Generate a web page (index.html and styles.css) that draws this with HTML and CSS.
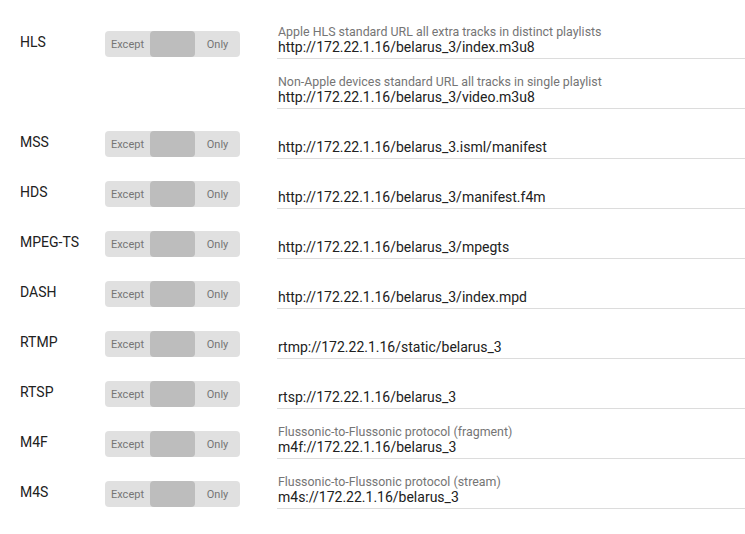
FILE: index.html
```html
<!DOCTYPE html>
<html>
<head>
<meta charset="utf-8">
<link rel="stylesheet" href="styles.css">
</head>
<body>
<div class="list">
  <div class="row">
    <div class="label">HLS</div>
    <div class="toggle"><span class="seg">Except</span><span class="seg knob"></span><span class="seg">Only</span></div>
    <div class="field"><div class="caption">Apple HLS standard URL all extra tracks in distinct playlists</div><div class="url">http://172.22.1.16/belarus_3/index.m3u8</div></div>
  </div>
  <div class="row">
    <div class="label"></div>
    <div class="spacer"></div>
    <div class="field"><div class="caption">Non-Apple devices standard URL all tracks in single playlist</div><div class="url">http://172.22.1.16/belarus_3/video.m3u8</div></div>
  </div>
  <div class="row">
    <div class="label">MSS</div>
    <div class="toggle"><span class="seg">Except</span><span class="seg knob"></span><span class="seg">Only</span></div>
    <div class="field"><div class="url">http://172.22.1.16/belarus_3.isml/manifest</div></div>
  </div>
  <div class="row">
    <div class="label">HDS</div>
    <div class="toggle"><span class="seg">Except</span><span class="seg knob"></span><span class="seg">Only</span></div>
    <div class="field"><div class="url">http://172.22.1.16/belarus_3/manifest.f4m</div></div>
  </div>
  <div class="row">
    <div class="label">MPEG-TS</div>
    <div class="toggle"><span class="seg">Except</span><span class="seg knob"></span><span class="seg">Only</span></div>
    <div class="field"><div class="url">http://172.22.1.16/belarus_3/mpegts</div></div>
  </div>
  <div class="row">
    <div class="label">DASH</div>
    <div class="toggle"><span class="seg">Except</span><span class="seg knob"></span><span class="seg">Only</span></div>
    <div class="field"><div class="url">http://172.22.1.16/belarus_3/index.mpd</div></div>
  </div>
  <div class="row">
    <div class="label">RTMP</div>
    <div class="toggle"><span class="seg">Except</span><span class="seg knob"></span><span class="seg">Only</span></div>
    <div class="field"><div class="url">rtmp://172.22.1.16/static/belarus_3</div></div>
  </div>
  <div class="row">
    <div class="label">RTSP</div>
    <div class="toggle"><span class="seg">Except</span><span class="seg knob"></span><span class="seg">Only</span></div>
    <div class="field"><div class="url">rtsp://172.22.1.16/belarus_3</div></div>
  </div>
  <div class="row">
    <div class="label">M4F</div>
    <div class="toggle"><span class="seg">Except</span><span class="seg knob"></span><span class="seg">Only</span></div>
    <div class="field"><div class="caption">Flussonic-to-Flussonic protocol (fragment)</div><div class="url">m4f://172.22.1.16/belarus_3</div></div>
  </div>
  <div class="row">
    <div class="label">M4S</div>
    <div class="toggle"><span class="seg">Except</span><span class="seg knob"></span><span class="seg">Only</span></div>
    <div class="field"><div class="caption">Flussonic-to-Flussonic protocol (stream)</div><div class="url">m4s://172.22.1.16/belarus_3</div></div>
  </div>
</div>
</body>
</html>
```
FILE: styles.css
```css
html, body {
  margin: 0;
  padding: 0;
  background: #ffffff;
}
body {
  font-family: Roboto, "Liberation Sans", sans-serif;
  color: #212121;
}
.list {
  padding-top: 9px;
  display: flex;
  flex-direction: column;
}
.row {
  height: 50px;
  display: flex;
  align-items: flex-start;
}
.label {
  width: 105px;
  flex: none;
  padding-left: 20px;
  box-sizing: border-box;
  margin-top: 23px;
  font-size: 14px;
  line-height: 20px;
  color: #212121;
}
.toggle, .spacer {
  width: 135px;
  height: 26px;
  margin-top: 22px;
  flex: none;
}
.toggle {
  display: flex;
  background: #e0e0e0;
  border-radius: 4px;
}
.seg {
  width: 45px;
  display: flex;
  align-items: center;
  justify-content: center;
  font-size: 11px;
  color: #757575;
}
.knob {
  background: #bdbdbd;
  border-radius: 4px;
}
.field {
  margin-left: 37px;
  flex: 1;
  height: 50px;
  box-sizing: border-box;
  border-bottom: 1px solid #dcdcdc;
  display: flex;
  flex-direction: column;
  justify-content: flex-end;
  padding-left: 1px;
  padding-bottom: 2px;
}
.caption {
  font-size: 12.4px;
  line-height: 12px;
  color: #757575;
}
.url {
  font-size: 14px;
  line-height: 18px;
  color: #212121;
}
```
